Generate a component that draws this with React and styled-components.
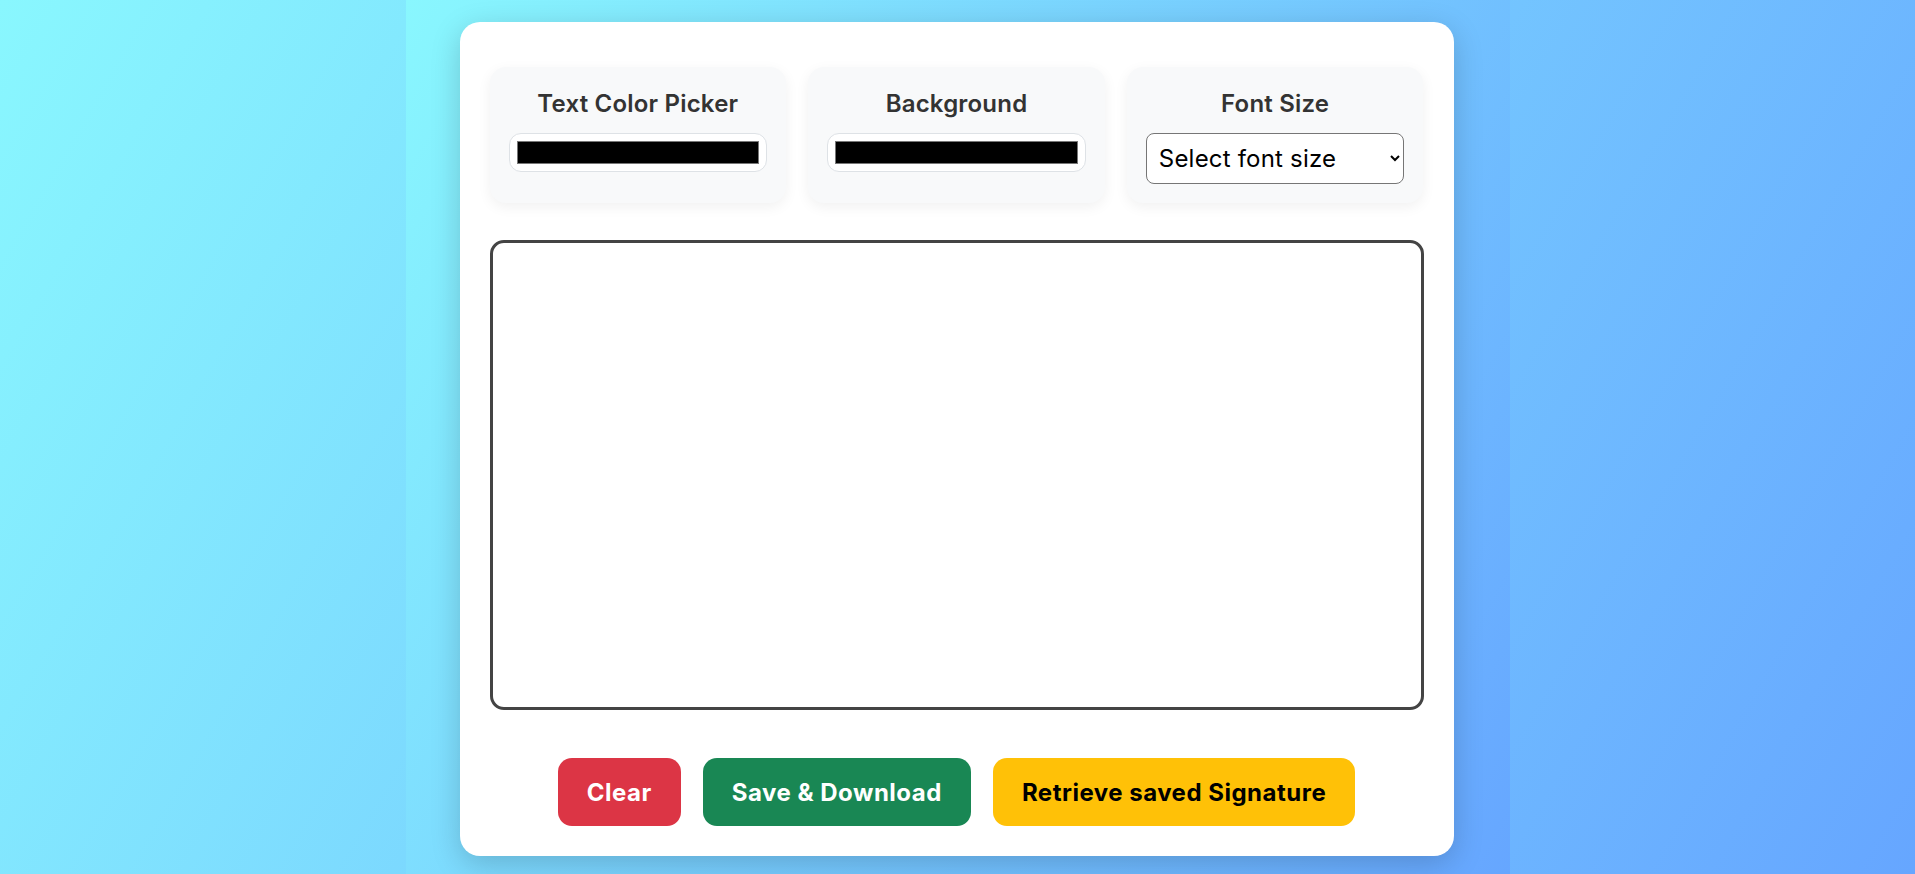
import React, { useState } from 'react';
import styled, { createGlobalStyle } from 'styled-components';

const GRADIENT = 'linear-gradient(120deg, #89f7fe 0%, #66a6ff 100%)';

const GlobalStyle = createGlobalStyle`
  * { box-sizing: border-box; }
  body {
    margin: 0;
    font-family: Inter, "Open Sans", Arial, sans-serif;
  }
`;

const Page = styled.div`
  min-height: 100vh;
  background: ${GRADIENT};
`;

const Container = styled.div`
  width: 1104px;
  margin: 0 auto;
  min-height: 100vh;
  padding: 22px 56px 18px 54px;
  background: ${GRADIENT};
`;

const Card = styled.div`
  background: #fff;
  border-radius: 20px;
  padding: 45px 30px 30px;
  box-shadow: 0 8px 30px rgba(0, 0, 0, 0.18);
`;

const Controls = styled.div`
  display: grid;
  grid-template-columns: repeat(3, 1fr);
  gap: 22px;
`;

const Panel = styled.div`
  background: #f8f9fa;
  border-radius: 16px;
  padding: 20px 19px 19px;
  box-shadow: 0 4px 14px rgba(0, 0, 0, 0.06);
  display: flex;
  flex-direction: column;
  align-items: center;
`;

const Label = styled.label`
  font-size: 24px;
  line-height: 33px;
  font-weight: 600;
  letter-spacing: 0.2px;
  color: #333;
  margin-bottom: 13px;
`;

const ColorInput = styled.input`
  -webkit-appearance: none;
  appearance: none;
  width: 100%;
  height: 39px;
  padding: 7px;
  margin: 0;
  border: 1px solid #dee2e6;
  border-radius: 12px;
  background: #fff;
  cursor: pointer;

  &::-webkit-color-swatch-wrapper { padding: 0; }
  &::-webkit-color-swatch {
    border: 1px solid #777;
    border-radius: 0;
  }
`;

const Select = styled.select`
  width: 100%;
  height: 51px;
  padding: 0 8px;
  margin: 0;
  border: 1px solid #767676;
  border-radius: 8px;
  background: #fff;
  color: #000;
  font-family: inherit;
  font-size: 24px;
  letter-spacing: 0.2px;
`;

const SignaturePad = styled.canvas`
  display: block;
  width: 100%;
  height: 470px;
  margin-top: 37px;
  border: 3px solid #444;
  border-radius: 14px;
  background: #fff;
`;

const ButtonRow = styled.div`
  display: flex;
  justify-content: center;
  gap: 22px;
  margin-top: 48px;
`;

const BUTTON_COLORS = {
  danger: { bg: '#dc3545', fg: '#fff' },
  success: { bg: '#198754', fg: '#fff' },
  warning: { bg: '#ffc107', fg: '#000' },
};

const Button = styled.button`
  height: 68px;
  padding: 0 29px;
  border: none;
  border-radius: 14px;
  font-family: inherit;
  font-size: 24px;
  font-weight: 700;
  letter-spacing: 0.5px;
  background: ${p => BUTTON_COLORS[p.$variant].bg};
  color: ${p => BUTTON_COLORS[p.$variant].fg};
  cursor: pointer;
`;

export default function App() {
  const [textColor, setTextColor] = useState('#000000');
  const [bgColor, setBgColor] = useState('#000000');
  const [fontSize, setFontSize] = useState('');

  return (
    <Page>
      <GlobalStyle />
      <Container>
        <Card>
          <Controls>
            <Panel>
              <Label>Text Color Picker</Label>
              <ColorInput type="color" value={textColor} onChange={e => setTextColor(e.target.value)} />
            </Panel>
            <Panel>
              <Label>Background</Label>
              <ColorInput type="color" value={bgColor} onChange={e => setBgColor(e.target.value)} />
            </Panel>
            <Panel>
              <Label>Font Size</Label>
              <Select value={fontSize} onChange={e => setFontSize(e.target.value)}>
                <option value="">Select font size</option>
                <option value="5">5px</option>
                <option value="10">10px</option>
                <option value="20">20px</option>
                <option value="30">30px</option>
              </Select>
            </Panel>
          </Controls>
          <SignaturePad />
          <ButtonRow>
            <Button $variant="danger">Clear</Button>
            <Button $variant="success">Save &amp; Download</Button>
            <Button $variant="warning">Retrieve saved Signature</Button>
          </ButtonRow>
        </Card>
      </Container>
    </Page>
  );
}
